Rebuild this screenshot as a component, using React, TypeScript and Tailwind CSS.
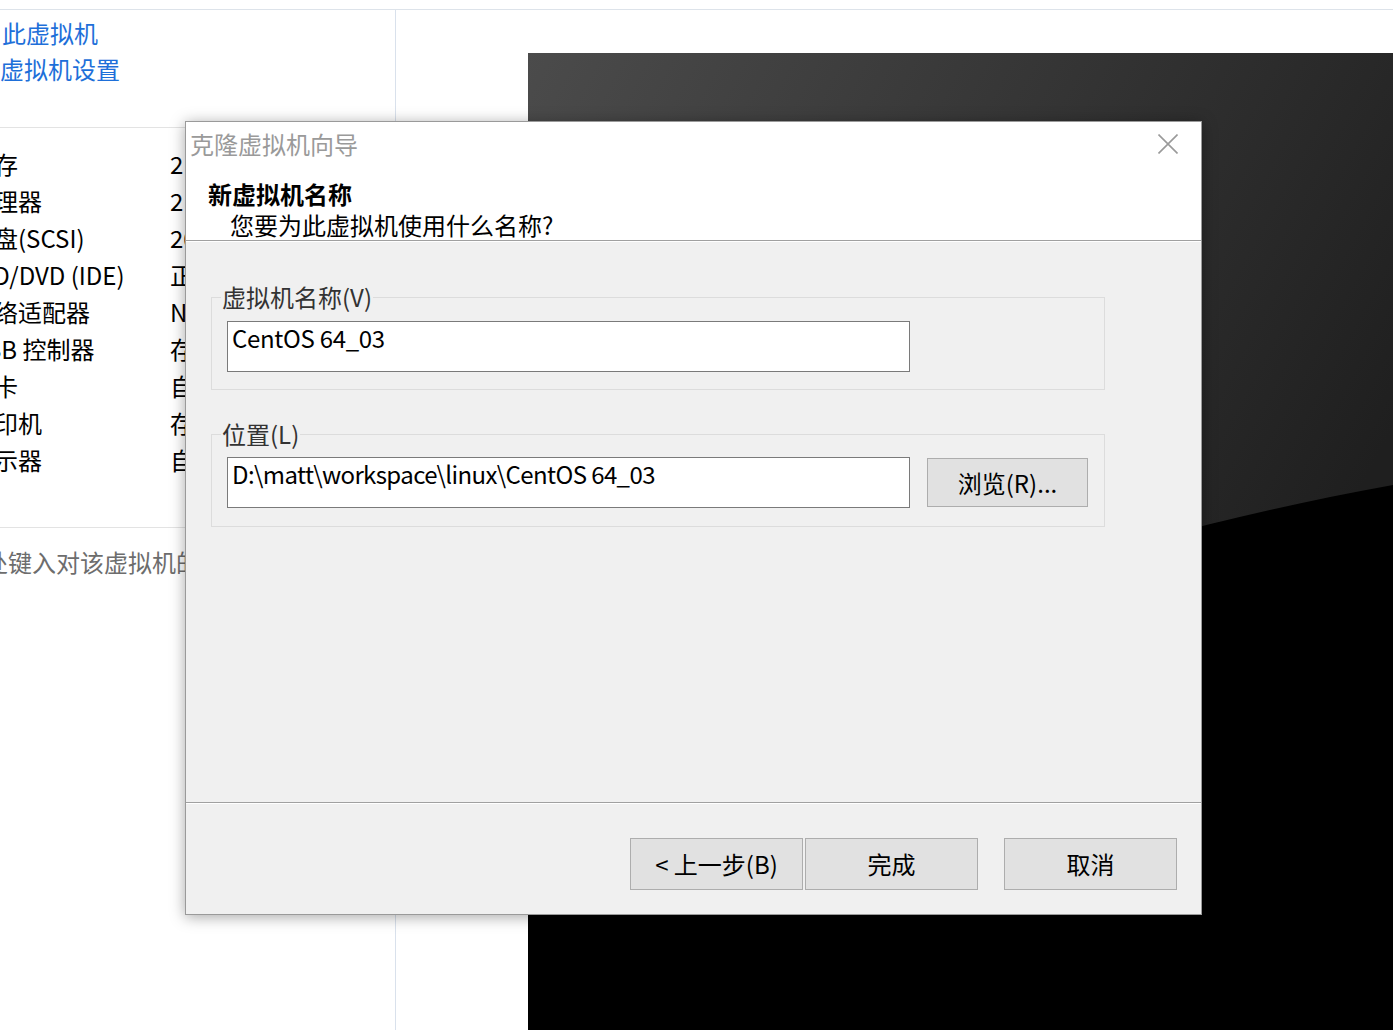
import type { ReactNode } from 'react'

const devices: [string, string][] = [
  ['内存', '2 GB'],
  ['处理器', '2'],
  ['硬盘(SCSI)', '20 GB'],
  ['CD/DVD (IDE)', '正在使用文件'],
  ['网络适配器', 'NAT'],
  ['USB 控制器', '存在'],
  ['声卡', '自动检测'],
  ['打印机', '存在'],
  ['显示器', '自动检测'],
]

function WinButton({ children, className = '' }: { children: ReactNode; className?: string }) {
  return (
    <button
      className={`flex items-center justify-center bg-[#e1e1e1] border border-[#adadad] text-[24px] text-black leading-[30px] ${className}`}
    >
      {children}
    </button>
  )
}

function GroupBox({ label, children, className = '' }: { label: string; children: ReactNode; className?: string }) {
  return (
    <fieldset className={`ml-[25px] w-[894px] border border-[#dcdcdc] px-[15px] ${className}`}>
      <legend className="ml-[-6px] px-[1px] text-[24px] leading-[30px] text-[#333]">{label}</legend>
      {children}
    </fieldset>
  )
}

export default function App() {
  return (
    <div className="relative w-[1393px] h-[1030px] overflow-hidden bg-white font-['Noto_Sans_CJK_SC','Noto_Sans',sans-serif]">
      {/* top rule */}
      <div className="h-[10px] border-b border-[#dde3ea]" />

      <div className="flex h-[1020px]">
        {/* left summary column */}
        <div className="w-[396px] shrink-0 border-r border-[#d9e1ec] flex flex-col overflow-hidden">
          <div className="h-[118px] border-b border-[#e3e3e3] pt-[5px] text-[24px] leading-[36px] text-[#1e6fd9] whitespace-nowrap">
            <div className="ml-[-46px]">开启此虚拟机</div>
            <div className="ml-[-48px]">编辑虚拟机设置</div>
          </div>

          <div className="h-[400px] border-b border-[#e3e3e3] pt-[17px] text-[24px] leading-[37px] text-black whitespace-nowrap">
            {devices.map(([name, value]) => (
              <div key={name} className="flex">
                <span className={`${name.startsWith('CD') ? 'ml-[-22px] w-[192px]' : 'ml-[-30px] w-[200px]'} shrink-0`}>{name}</span>
                <span>{value}</span>
              </div>
            ))}
          </div>

          <div className="pt-[16px] ml-[-64px] text-[24px] leading-[36px] text-[#6d6d6d] whitespace-nowrap">
            在此处键入对该虚拟机的描述。
          </div>
        </div>

        {/* console area */}
        <div className="flex-1 pl-[132px] pt-[43px]">
          <svg width="865" height="977" viewBox="0 0 865 977" className="block">
            <defs>
              <linearGradient id="scr" x1="0" y1="0" x2="0.9" y2="0.55">
                <stop offset="0" stopColor="#4b4b4b" />
                <stop offset="1" stopColor="#1f1f1f" />
              </linearGradient>
            </defs>
            <rect width="865" height="977" fill="url(#scr)" />
            <path d="M0 830 C 260 580 560 488 865 432 L865 977 L0 977 Z" fill="#000" />
          </svg>
        </div>
      </div>

      {/* clone wizard dialog */}
      <div className="absolute left-[185px] top-[121px] w-[1017px] h-[794px] flex flex-col bg-white border border-[#9a9a9a] shadow-[0_2px_14px_rgba(0,0,0,0.35)]">
        <div className="h-[46px] flex items-center justify-between pl-[4px] pr-[23px]">
          <span className="mt-[-3px] text-[24px] leading-[30px] text-[#9a9a9a]">克隆虚拟机向导</span>
          <svg width="20" height="20" viewBox="0 0 20 20" className="mt-[-2px]">
            <path d="M0.5 0.5 L19.5 19.5 M19.5 0.5 L0.5 19.5" stroke="#9a9a9a" strokeWidth="1.6" />
          </svg>
        </div>

        <div className="h-[73px] border-b border-[#a0a0a0] pt-[12px] text-black">
          <div className="pl-[22px] text-[24px] leading-[28px] font-bold">新虚拟机名称</div>
          <div className="pl-[44px] mt-[3px] text-[24px] leading-[28px]">您要为此虚拟机使用什么名称?</div>
        </div>

        <div className="h-[561px] border-t border-white bg-[#f0f0f0] pt-[40px]">
          <GroupBox label="虚拟机名称(V)" className="pb-[17px]">
            <div className="mt-[9px] w-[683px] h-[51px] bg-white border border-[#7a7a7a] pl-[4px] pt-[1px] text-[24px] leading-[30px] text-black whitespace-nowrap tracking-[-0.3px]">
              CentOS 64_03
            </div>
          </GroupBox>

          <GroupBox label="位置(L)" className="mt-[29px] pb-[18px]">
            <div className="mt-[8px] flex items-start gap-[17px]">
              <div className="w-[683px] h-[51px] bg-white border border-[#7a7a7a] pl-[4px] pt-[1px] text-[24px] leading-[30px] text-black whitespace-nowrap tracking-[-0.6px]">
                D:\matt\workspace\linux\CentOS 64_03
              </div>
              <WinButton className="mt-[1px] w-[161px] h-[49px] text-[#222]">浏览(R)...</WinButton>
            </div>
          </GroupBox>
        </div>

        <div className="flex-1 border-t border-[#a0a0a0] bg-[#f0f0f0]">
          <div className="h-full border-t border-white flex justify-end items-start pt-[34px] pr-[24px]">
            <WinButton className="w-[173px] h-[52px]">&lt; 上一步(B)</WinButton>
            <WinButton className="ml-[2px] w-[173px] h-[52px]">完成</WinButton>
            <WinButton className="ml-[26px] w-[173px] h-[52px]">取消</WinButton>
          </div>
        </div>
      </div>
    </div>
  )
}
